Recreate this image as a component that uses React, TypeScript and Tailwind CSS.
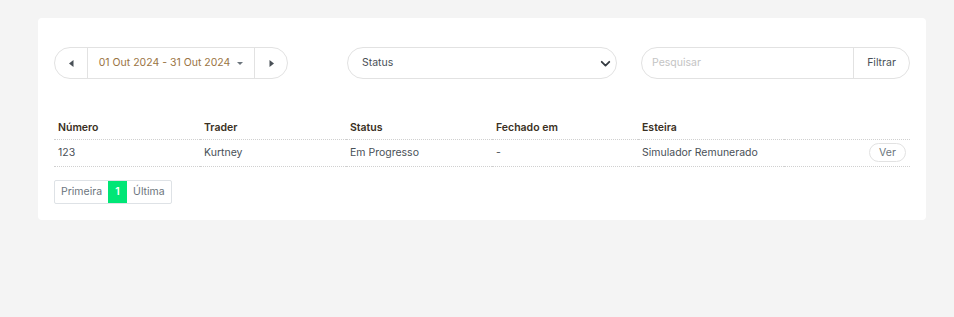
import React from 'react';

const rows = [
  { numero: '123', trader: 'Kurtney', status: 'Em Progresso', fechado: '-', esteira: 'Simulador Remunerado' },
];

export default function App() {
  return (
    <div className="min-h-[317px] bg-[#f4f4f4] pt-[18px] pl-[38px] pr-[28px] font-['Inter',sans-serif] text-[10.5px] text-[#495057]">
      <div className="w-[888px] rounded-[4px] bg-white px-4 pt-[29px] pb-4">
        {/* filters */}
        <div className="flex items-center">
          <div className="flex h-[32px] w-[234px] items-stretch rounded-full border border-[#e2e2e2]">
            <button className="flex w-[33px] items-center justify-center border-r border-[#e2e2e2]">
              <svg width="5" height="7" viewBox="0 0 5 7"><path d="M4.5 0v7L0 3.5z" fill="#495057" /></svg>
            </button>
            <button className="flex flex-1 items-center justify-center gap-[7px] text-[#9a7443]">
              01 Out 2024 - 31 Out 2024
              <svg width="6" height="3" viewBox="0 0 6 3"><path d="M0 0h6L3 3z" fill="#6c757d" /></svg>
            </button>
            <button className="flex w-[33px] items-center justify-center border-l border-[#e2e2e2]">
              <svg width="5" height="7" viewBox="0 0 5 7"><path d="M0.5 0v7L5 3.5z" fill="#495057" /></svg>
            </button>
          </div>

          <div className="ml-[59px] flex h-[32px] w-[270px] items-center justify-between rounded-full border border-[#e2e2e2] pl-[14px] pr-[5px] text-[#495057]">
            <span>Status</span>
            <svg width="11" height="11" viewBox="0 0 16 16">
              <path d="M2.5 5.5l5.5 5.5 5.5-5.5" fill="none" stroke="#343a40" strokeWidth="2.6" strokeLinecap="round" strokeLinejoin="round" />
            </svg>
          </div>

          <div className="ml-[24px] flex h-[32px] w-[269px] items-stretch rounded-full border border-[#e2e2e2]">
            <input
              placeholder="Pesquisar"
              className="min-w-0 flex-1 rounded-l-full bg-transparent pl-[10px] outline-none placeholder:text-[#c4c4c4]"
            />
            <button className="w-[56px] border-l border-[#e2e2e2] text-[#495057]">Filtrar</button>
          </div>
        </div>

        {/* table */}
        <table className="mt-[41px] w-[856px] table-fixed border-collapse text-left">
          <thead>
            <tr className="border-b border-dotted border-[#d0d0d0]">
              <th className="w-[146px] px-1 pb-[3px] font-semibold text-[#3a3023]">Número</th>
              <th className="w-[146px] px-1 pb-[3px] font-semibold text-[#3a3023]">Trader</th>
              <th className="w-[146px] px-1 pb-[3px] font-semibold text-[#3a3023]">Status</th>
              <th className="w-[146px] px-1 pb-[3px] font-semibold text-[#3a3023]">Fechado em</th>
              <th className="w-[146px] px-1 pb-[3px] font-semibold text-[#3a3023]">Esteira</th>
              <th className="px-1 pb-[3px]"></th>
            </tr>
          </thead>
          <tbody>
            {rows.map((r) => (
              <tr key={r.numero} className="h-[27px] border-b border-dotted border-[#d0d0d0]">
                <td className="px-1">{r.numero}</td>
                <td className="px-1">{r.trader}</td>
                <td className="px-1">{r.status}</td>
                <td className="px-1">{r.fechado}</td>
                <td className="px-1">{r.esteira}</td>
                <td className="px-1 text-right">
                  <button className="h-[19px] w-[37px] rounded-full border border-[#e2e2e2] text-[#6c757d]">Ver</button>
                </td>
              </tr>
            ))}
          </tbody>
        </table>

        {/* pagination */}
        <div className="mt-[13px] flex h-[24px] w-fit items-stretch rounded-[2px] border border-[#dee2e6] text-[#6c757d]">
          <span className="flex items-center px-[6px]">Primeira</span>
          <span className="flex w-[19px] items-center justify-center bg-[#00e676] font-semibold text-white">1</span>
          <span className="flex items-center px-[6px]">Última</span>
        </div>
      </div>
    </div>
  );
}
